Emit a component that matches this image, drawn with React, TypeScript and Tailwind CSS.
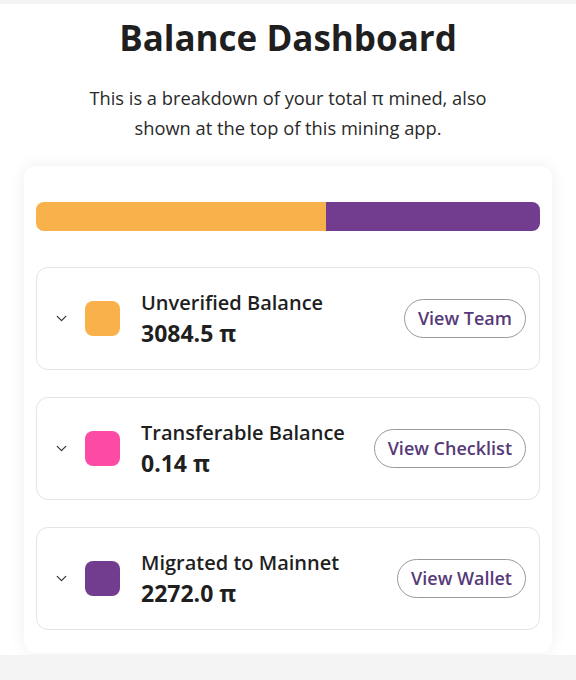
import { ChevronDown } from "lucide-react";

const rows = [
  { name: "Unverified Balance", value: "3084.5 π", color: "bg-[#f9b14b]", action: "View Team" },
  { name: "Transferable Balance", value: "0.14 π", color: "bg-[#fd4aa5]", action: "View Checklist" },
  { name: "Migrated to Mainnet", value: "2272.0 π", color: "bg-[#723c8f]", action: "View Wallet" },
];

const App = () => {
  return (
    <div className="w-[576px] h-[680px] bg-white overflow-hidden flex flex-col font-['Open_Sans',sans-serif] text-[#222]">
      <div className="h-[4px] bg-[#f3f3f3]" />
      <h1 className="mt-[14px] text-center text-[35px] leading-[40px] font-bold text-[#1f1f1f]">
        Balance Dashboard
      </h1>
      <p className="mt-[25px] mx-auto w-[410px] text-center text-[18.3px] leading-[30px] text-[#2a2a2a]">
        This is a breakdown of your total π mined, also shown at the top of this mining app.
      </p>

      <div className="mt-[23px] mx-[24px] bg-white rounded-xl shadow-[0_0_16px_rgba(0,0,0,0.07)] px-[12px] pt-[36px] pb-[23px]">
        {/* stacked bar */}
        <div className="flex h-[29px] rounded-lg overflow-hidden">
          <div className="bg-[#f9b14b] w-[57.5%]" />
          <div className="bg-[#723c8f] flex-1" />
        </div>

        <div className="mt-[36px] flex flex-col gap-[27px]">
          {rows.map((r) => (
            <div
              key={r.name}
              className="h-[103px] border border-[#e4e4e4] rounded-xl flex items-center pl-[16px] pr-[13px]"
            >
              <ChevronDown className="w-[17px] h-[17px] text-[#333]" strokeWidth={1.75} />
              <div className={`ml-[15px] w-[35px] h-[35px] rounded-lg ${r.color}`} />
              <div className="ml-[21px] flex flex-col flex-1">
                <span className="text-[20px] leading-[26px] font-semibold text-[#1f1f1f]">{r.name}</span>
                <span className="mt-[2px] text-[23px] leading-[30px] font-bold text-[#1f1f1f]">{r.value}</span>
              </div>
              <button className="h-[39px] px-[13px] rounded-full border border-[#9a9a9a] text-[18px] font-semibold text-[#563a78]">
                {r.action}
              </button>
            </div>
          ))}
        </div>
      </div>

      <div className="mt-[2px] flex-1 bg-[#f4f4f4]" />
    </div>
  );
};

export default App;
